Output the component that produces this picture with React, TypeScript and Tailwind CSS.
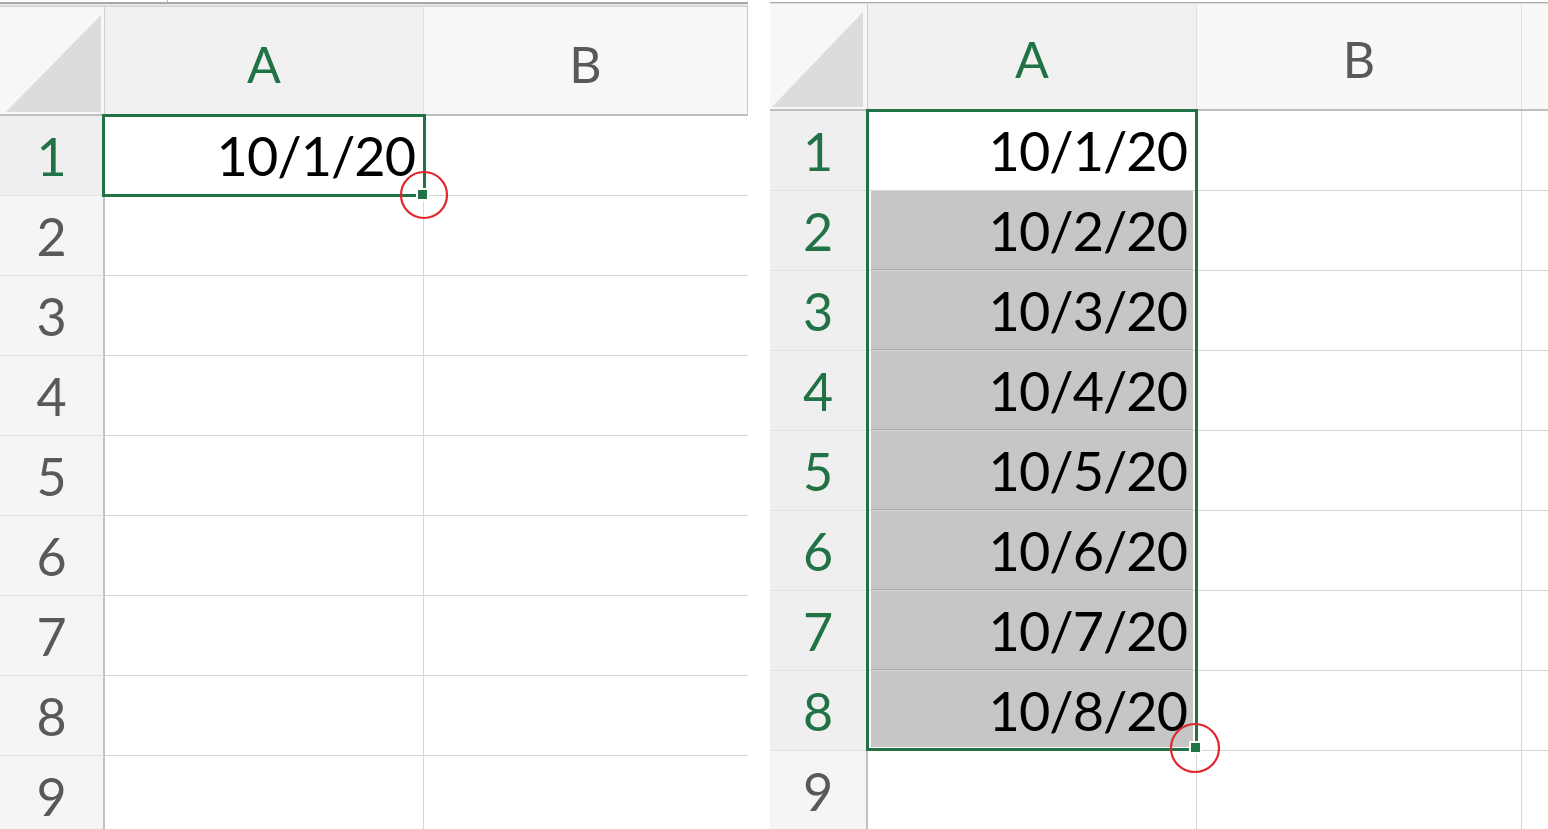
import React from 'react';

const rows = [1, 2, 3, 4, 5, 6, 7, 8, 9];

function Triangle({ w, h }: { w: number; h: number }) {
  return (
    <svg width={w} height={h} viewBox={`0 0 ${w} ${h}`}>
      <polygon points={`${w},0 ${w},${h} 0,${h}`} fill="#dcdcdc" />
    </svg>
  );
}

function RedCircle({ size, r }: { size: number; r: number }) {
  return (
    <svg width={size} height={size} viewBox={`0 0 ${size} ${size}`}>
      <circle cx={size / 2} cy={size / 2} r={r} fill="none" stroke="#e0262a" strokeWidth={2.2} />
    </svg>
  );
}

function LeftPanel() {
  return (
    <div className="relative w-[748px] shrink-0 flex flex-col">
      <div className="h-[7px] flex flex-col shrink-0">
        <div className="h-[2px] flex">
          <div className="w-[167px]" />
          <div className="w-px bg-[#b5b5b5]" />
        </div>
        <div className="h-[2px] bg-[#a9a9a9]" />
        <div className="h-[2px] bg-[#e4e4e4]" />
        <div className="h-px bg-[#cfcfcf]" />
      </div>
      <div className="h-[109px] shrink-0 flex border-b-2 border-[#bfbfbf]">
        <div className="w-[105px] bg-[#f7f7f7] border-r border-[#cfcfcf] flex items-end justify-end pb-[2px] pr-[3px]">
          <Triangle w={95} h={97} />
        </div>
        <div className="w-[319px] bg-[#f1f1f1] border-r border-[#e0e0e0] flex items-center justify-center pt-[7px] text-[50px] text-[#217346]">
          A
        </div>
        <div className="flex-1 bg-[#f8f8f8] border-r border-[#c8c8c8] flex items-center justify-center pt-[7px] text-[50px] text-[#595959]">
          B
        </div>
      </div>
      {rows.map((n) => (
        <div key={n} className="h-[80px] shrink-0 flex">
          <div
            className={
              n === 1
                ? 'w-[105px] border-r-2 border-b border-r-[#c2c2c2] border-b-[#e2e2e2] bg-[#efefef] flex items-center justify-center text-[52px] text-[#217346]'
                : 'w-[105px] border-r-2 border-b border-r-[#c2c2c2] border-b-[#e2e2e2] bg-[#f5f5f5] flex items-center justify-center text-[52px] text-[#595959]'
            }
          >
            {n}
          </div>
          <div className="w-[319px] border-r border-b border-[#d6d6d6] flex items-center justify-end pr-[8px] text-[54px] tracking-[-1px] text-black">
            {n === 1 ? '10/1/20' : ''}
          </div>
          <div className="flex-1 border-b border-[#d6d6d6]" />
        </div>
      ))}
      <div className="absolute left-[102px] top-[114px] w-[324px] h-[83px] border-[3px] border-[#217346]" />
      <div className="absolute left-[416px] top-[188px] w-[13px] h-[13px] bg-[#217346] border-2 border-white" />
      <div className="absolute left-[399px] top-[170px]">
        <RedCircle size={50} r={23} />
      </div>
    </div>
  );
}

function RightPanel() {
  return (
    <div className="relative w-[778px] shrink-0 flex flex-col">
      <div className="h-[4px] flex flex-col shrink-0">
        <div className="h-[2px]" />
        <div className="h-px bg-[#a9a9a9]" />
        <div className="h-px bg-[#e0e0e0]" />
      </div>
      <div className="h-[107px] shrink-0 flex border-b-2 border-[#bfbfbf]">
        <div className="w-[98px] bg-[#f7f7f7] border-r border-[#cfcfcf] flex items-end justify-end pb-[2px] pr-[4px]">
          <Triangle w={91} h={95} />
        </div>
        <div className="w-[329px] bg-[#f1f1f1] border-r border-[#e0e0e0] flex items-center justify-center pt-[6px] text-[50px] text-[#217346]">
          A
        </div>
        <div className="w-[325px] bg-[#f8f8f8] border-r border-[#e0e0e0] flex items-center justify-center pt-[6px] text-[50px] text-[#595959]">
          B
        </div>
        <div className="flex-1 bg-[#f8f8f8]" />
      </div>
      {rows.map((n) => {
        const sel = n <= 8;
        const filled = n >= 2 && n <= 8;
        return (
          <div key={n} className="h-[80px] shrink-0 flex">
            <div
              className={
                sel
                  ? 'w-[98px] border-r-2 border-b border-r-[#c2c2c2] border-b-[#e2e2e2] bg-[#efefef] flex items-center justify-center text-[52px] text-[#217346]'
                  : 'w-[98px] border-r-2 border-b border-r-[#c2c2c2] border-b-[#e2e2e2] bg-[#f5f5f5] flex items-center justify-center text-[52px] text-[#595959]'
              }
            >
              {n}
            </div>
            <div className="w-[329px] border-r border-b border-[#d6d6d6] flex">
              {sel ? (
                <div
                  className={
                    filled
                      ? n === 8
                        ? 'flex-1 ml-[3px] mr-[3px] mb-[3px] bg-[#c6c6c6] flex items-center justify-end pr-[6px] pt-[3px] text-[54px] tracking-[-1px] text-black'
                        : 'flex-1 ml-[3px] mr-[3px] bg-[#c6c6c6] border-b border-[#a8a8a8] flex items-center justify-end pr-[6px] text-[54px] tracking-[-1px] text-black'
                      : 'flex-1 ml-[3px] mr-[3px] bg-white flex items-center justify-end pr-[6px] text-[54px] tracking-[-1px] text-black'
                  }
                >
                  {`10/${n}/20`}
                </div>
              ) : null}
            </div>
            <div className="w-[325px] border-r border-b border-[#d6d6d6]" />
            <div className="flex-1 border-b border-[#d6d6d6]" />
          </div>
        );
      })}
      <div className="absolute left-[96px] top-[109px] w-[332px] h-[642px] border-[3px] border-[#217346]" />
      <div className="absolute left-[419px] top-[741px] w-[13px] h-[13px] bg-[#217346] border-2 border-white" />
      <div className="absolute left-[399px] top-[722px]">
        <RedCircle size={52} r={24} />
      </div>
    </div>
  );
}

export default function App() {
  return (
    <div className="h-[829px] w-[1548px] overflow-hidden bg-white flex [font-family:Lato,sans-serif]">
      <LeftPanel />
      <div className="w-[22px] shrink-0" />
      <RightPanel />
    </div>
  );
}
